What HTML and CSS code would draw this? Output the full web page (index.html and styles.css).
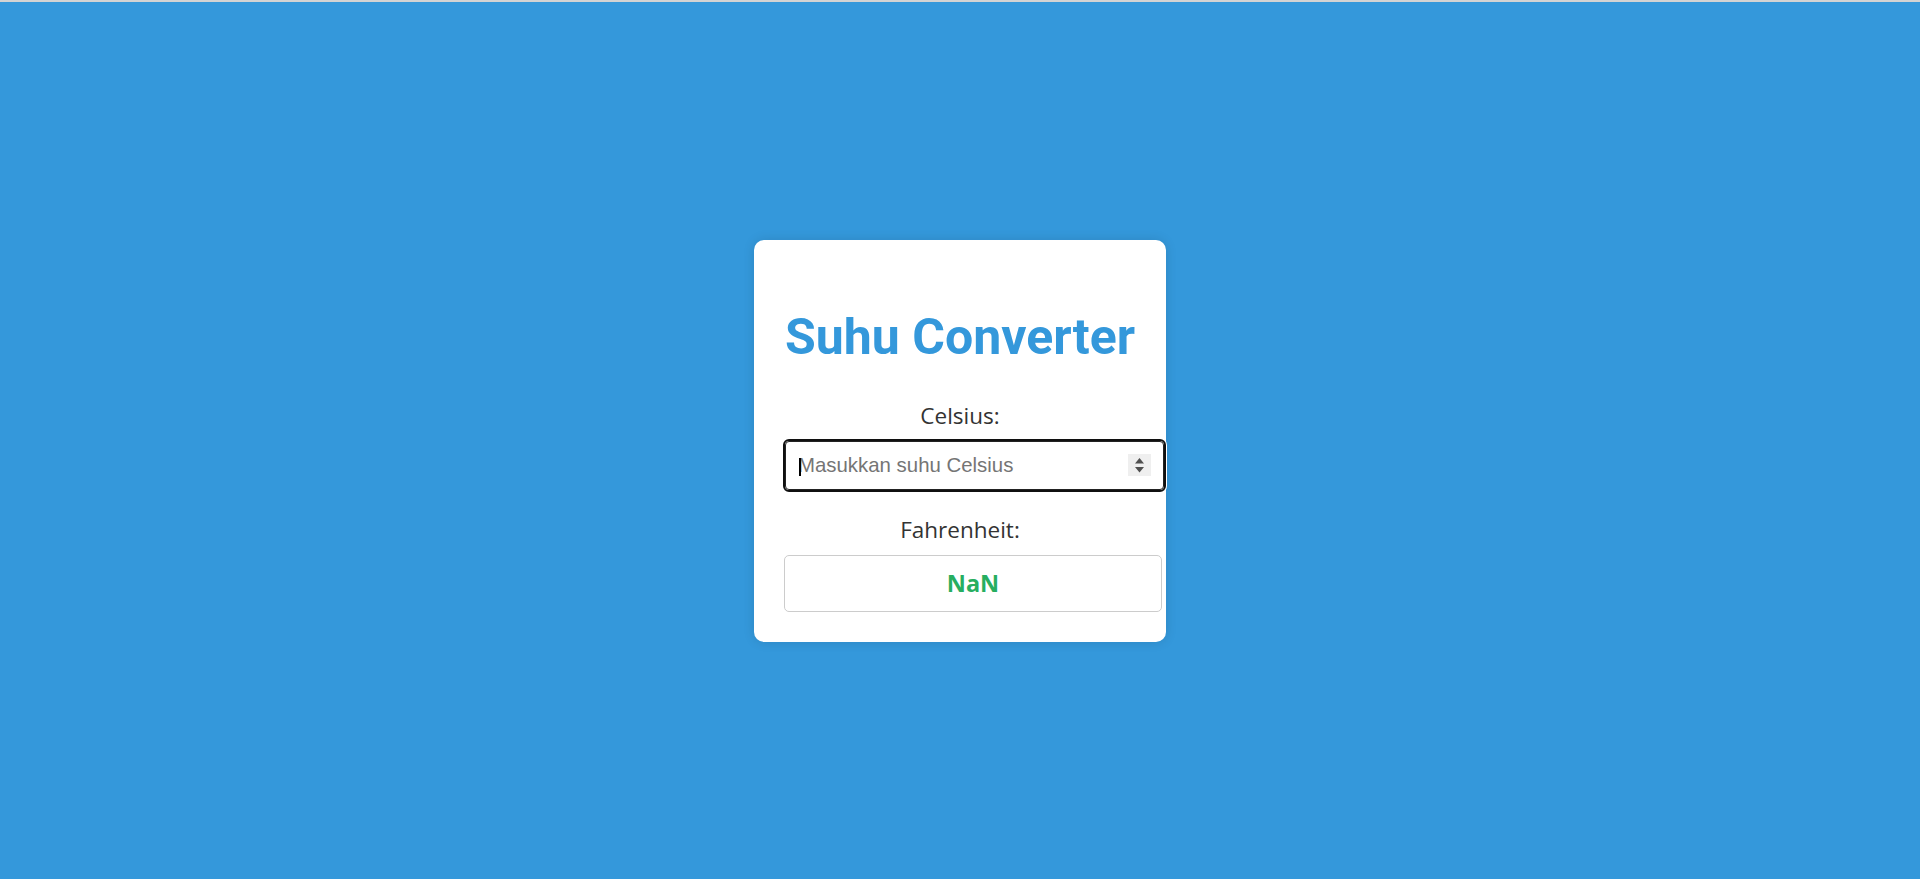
FILE: index.html
```html
<!DOCTYPE html>
<html lang="id">
<head>
<meta charset="utf-8">
<title>Suhu Converter</title>
<link rel="stylesheet" href="styles.css">
</head>
<body>
<div class="card">
  <h1 class="title">Suhu Converter</h1>
  <label class="label" for="celsius">Celsius:</label>
  <div class="field">
    <input class="input" id="celsius" type="number" placeholder="Masukkan suhu Celsius">
    <span class="caret"></span>
    <span class="spin">
      <svg width="23" height="22" viewBox="0 0 23 22"><path d="M7 9.5 H16 L11.5 4 Z M7 13 H16 L11.5 18.5 Z" fill="#505050"/></svg>
    </span>
  </div>
  <div class="label label-f">Fahrenheit:</div>
  <div class="result">NaN</div>
</div>
</body>
</html>
```

FILE: styles.css
```css
html, body {
  margin: 0;
  padding: 0;
}
body {
  box-sizing: border-box;
  min-height: 100vh;
  border-top: 2px solid #d3d3d3;
  background: #3498db;
  display: flex;
  align-items: center;
  justify-content: center;
  font-family: "Open Sans", "Noto Sans", sans-serif;
}
.card {
  box-sizing: border-box;
  width: 412px;
  padding: 30px 30px 30px;
  background: #fff;
  border-radius: 10px;
  box-shadow: 0 0 12px rgba(0, 0, 0, 0.12);
  text-align: center;
}
.title {
  margin: 35px 0 32px;
  font-family: Roboto, "Open Sans", sans-serif;
  font-weight: 700;
  font-size: 50px;
  line-height: 64px;
  color: #3498db;
}
.label {
  display: block;
  font-size: 22.5px;
  line-height: 30px;
  color: #333;
  margin-bottom: 10px;
}
.label-f {
  margin-top: 25px;
}
.field {
  position: relative;
  margin-left: 1px;
  margin-right: -28px;
}
.input {
  display: block;
  box-sizing: border-box;
  width: 100%;
  height: 49px;
  margin: 0;
  padding: 12px;
  border: 1px solid #222;
  border-radius: 4px;
  outline: 2px solid #101010;
  box-shadow: 0 0 0 3px #fff;
  font-family: "Liberation Sans", Arial, sans-serif;
  font-size: 20.4px;
  line-height: 23px;
  color: #222;
  background: #fff;
  -moz-appearance: textfield;
}
.input::-webkit-inner-spin-button,
.input::-webkit-outer-spin-button {
  -webkit-appearance: none;
  margin: 0;
}
.input::placeholder {
  color: #757575;
}
.caret {
  position: absolute;
  left: 14px;
  top: 17px;
  width: 2px;
  height: 18px;
  background: #000;
}
.spin {
  position: absolute;
  right: 13px;
  top: 13px;
  width: 23px;
  height: 22px;
  background: #efefef;
  display: flex;
}
.result {
  width: 100%;
  border: 1px solid #ccc;
  border-radius: 5px;
  padding: 12px;
  font-size: 23.5px;
  line-height: 31px;
  font-weight: 700;
  color: #27ae60;
}
```
